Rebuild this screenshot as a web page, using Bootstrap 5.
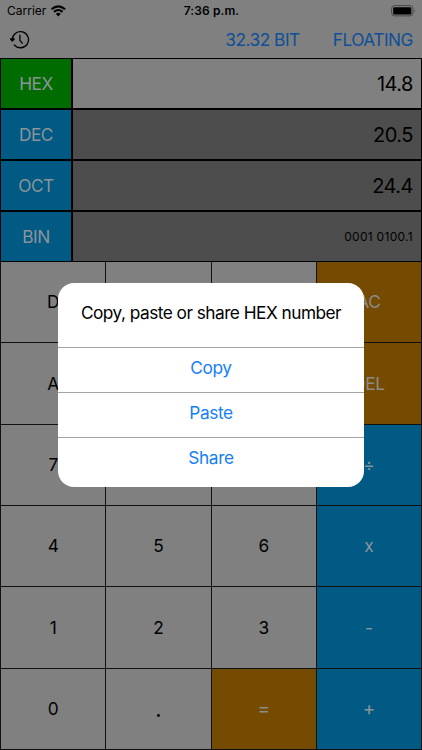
<!DOCTYPE html>
<html lang="en">
<head>
<meta charset="utf-8">
<meta name="viewport" content="width=device-width, initial-scale=1">
<title>Calculator</title>
<link href="https://cdn.jsdelivr.net/npm/bootstrap@5.3.0/dist/css/bootstrap.min.css" rel="stylesheet">
<style>
  body { font-family: Inter, Roboto, "Liberation Sans", sans-serif; background: #808080; color: #000; line-height: 1.2; }
  .screen { width: 422px; height: 750px; overflow: hidden; }
  .status { height: 22px; font-size: 12px; padding: 0 6px 0 7px; display: grid; grid-template-columns: 1fr auto 1fr; }
  .clock { letter-spacing: .1px; }
  .tools { height: 36px; padding: 0 9px; font-size: 17.3px; letter-spacing: -.5px; color: #0f4f99; }
  .bit-mode { margin-right: 33px; }
  .bases { height: 204px; background: #000; padding: 1px 1px 0; display: grid; grid-template-rows: 49px 49px 49px 49px; row-gap: 2px; }
  .base-row { display: grid; grid-template-columns: 70px 1fr; column-gap: 2px; }
  .base-name { background: #005a84; color: #8c9499; font-size: 17.3px; letter-spacing: -.5px; padding-top: 2px; }
  .base-value { background: #4d4d4d; font-size: 20px; letter-spacing: -.5px; padding-right: 8px; padding-top: 1px; }
  .base-row.active .base-name { background: #006c00; }
  .base-row.active .base-value { background: #808080; }
  .base-value.tiny { font-size: 12px; letter-spacing: .3px; }
  .keys { height: 488px; display: grid; grid-template-columns: repeat(4, 1fr); grid-template-rows: repeat(6, 1fr); gap: 1px; background: #101010; padding: 0 1px 1px; font-size: 17.3px; letter-spacing: -.3px; }
  .key { background: #808080; padding-top: 1px; }
  .key.gold { background: #744b00; color: #8c8c8c; }
  .key.blue { background: #005a84; color: #8c9499; }
  .key.dot { font-size: 22px; }
  .key.wide-sign { font-size: 19px; }
  .sheet { left: 58px; top: 283px; width: 306px; height: 204px; border-radius: 16px; background: #fff; font-size: 17.3px; letter-spacing: -.53px; overflow: hidden; }
  .sheet-title { height: 64px; padding-bottom: 4px; }
  .sheet-item { height: 45px; border-top: 1px solid #a4a4a4; color: #147efb; padding-bottom: 3px; letter-spacing: -.4px; }
</style>
<script src="https://cdn.jsdelivr.net/npm/bootstrap@5.3.0/dist/js/bootstrap.bundle.min.js"></script>
</head>
<body>
<main class="screen position-relative d-flex flex-column">
  <div class="status align-items-center">
    <div class="d-flex align-items-center">
      <span>Carrier</span>
      <svg class="ms-1" width="16" height="12" viewBox="0 0 16 12"><g fill="none" stroke="#000" stroke-width="2.1"><path d="M1.5 4.3Q8.3 -1.7 15.1 4.3"/><path d="M4 6.9Q8.3 3.1 12.6 6.9"/></g><path d="M5.8 8.8Q8.3 6.6 10.8 8.8L8.3 11.4Z"/></svg>
    </div>
    <span class="clock fw-semibold">7:36 p.m.</span>
    <svg class="ms-auto" width="26" height="12" viewBox="0 0 26 12"><rect x="1.6" y=".6" width="21.3" height="10.3" rx="3" fill="none" stroke="#484848"/><rect x="3.2" y="2.2" width="18.1" height="7.2" rx="1.2"/><path d="M24.4 4q1.5 1.7 0 3.6Z" fill="#484848"/></svg>
  </div>
  <div class="tools d-flex align-items-center">
    <svg width="21" height="20" viewBox="0 0 21 20" fill="none" stroke="#000" stroke-width="1.3" stroke-linecap="round" stroke-linejoin="round"><path d="M3.3 9.6A8.1 8.1 0 1 1 5.3 15"/><path d="M1.6 9L3.3 11L5.2 9Z" fill="#000"/><path d="M10.9 5.1V10.3L13.2 13.2"/></svg>
    <span class="bit-mode ms-auto">32.32 BIT</span>
    <span>FLOATING</span>
  </div>
  <section class="bases">
    <div class="base-row active"><div class="base-name d-flex align-items-center justify-content-center">HEX</div><div class="base-value d-flex align-items-center justify-content-end">14.8</div></div>
    <div class="base-row"><div class="base-name d-flex align-items-center justify-content-center">DEC</div><div class="base-value d-flex align-items-center justify-content-end">20.5</div></div>
    <div class="base-row"><div class="base-name d-flex align-items-center justify-content-center">OCT</div><div class="base-value d-flex align-items-center justify-content-end">24.4</div></div>
    <div class="base-row"><div class="base-name d-flex align-items-center justify-content-center">BIN</div><div class="base-value tiny d-flex align-items-center justify-content-end">0001 0100.1</div></div>
  </section>
  <section class="keys">
    <div class="key d-flex align-items-center justify-content-center">D</div><div class="key"></div><div class="key"></div><div class="key gold d-flex align-items-center justify-content-center">AC</div>
    <div class="key d-flex align-items-center justify-content-center">A</div><div class="key"></div><div class="key"></div><div class="key gold d-flex align-items-center justify-content-center">DEL</div>
    <div class="key d-flex align-items-center justify-content-center">7</div><div class="key"></div><div class="key"></div><div class="key blue d-flex align-items-center justify-content-center">÷</div>
    <div class="key d-flex align-items-center justify-content-center">4</div><div class="key d-flex align-items-center justify-content-center">5</div><div class="key d-flex align-items-center justify-content-center">6</div><div class="key blue d-flex align-items-center justify-content-center">x</div>
    <div class="key d-flex align-items-center justify-content-center">1</div><div class="key d-flex align-items-center justify-content-center">2</div><div class="key d-flex align-items-center justify-content-center">3</div><div class="key blue d-flex align-items-center justify-content-center">-</div>
    <div class="key d-flex align-items-center justify-content-center">0</div><div class="key dot d-flex align-items-center justify-content-center">.</div><div class="key gold wide-sign d-flex align-items-center justify-content-center">=</div><div class="key blue wide-sign d-flex align-items-center justify-content-center">+</div>
  </section>
  <div class="sheet position-absolute">
    <div class="sheet-title d-flex align-items-center justify-content-center">Copy, paste or share HEX number</div>
    <div class="sheet-item d-flex align-items-center justify-content-center">Copy</div>
    <div class="sheet-item d-flex align-items-center justify-content-center">Paste</div>
    <div class="sheet-item d-flex align-items-center justify-content-center">Share</div>
  </div>
</main>
</body>
</html>
